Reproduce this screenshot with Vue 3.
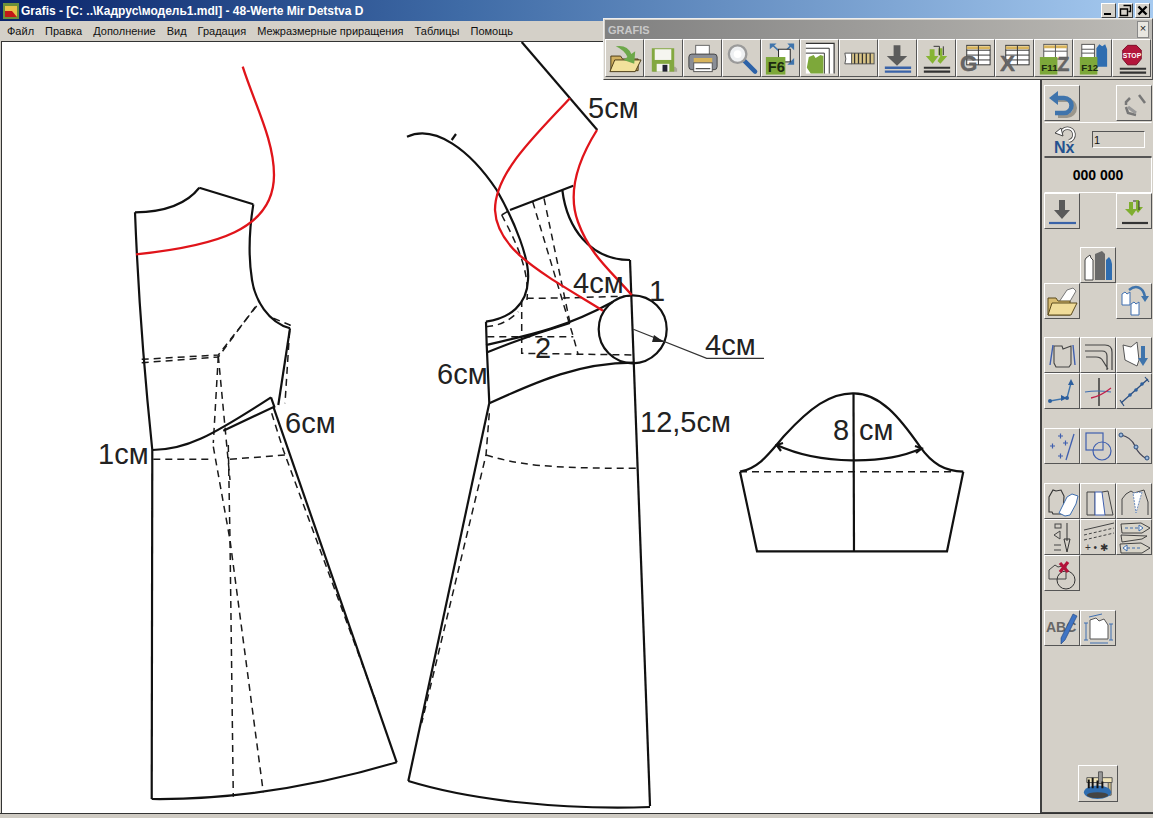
<script setup>
const ln = (p) => 'M' + p.map((q) => q.join(' ')).join('L')

const solid = [
  // left piece
  'M135 212.3C160 212 185 206 199.3 187.7',
  ln([[199.3, 187.7], [253.3, 204.3]]),
  'M253.3 204.3C250 225 248 255 252 280C255 300 268 322 290 328.3',
  ln([[290, 328.3], [278.3, 405]]),
  'M135 212.3C138 290 145 380 152.3 450',
  ln([[152.3, 450], [151.7, 799]]),
  'M151.7 799C240 800 320 785 396.7 762.3',
  ln([[396.7, 762.3], [273.3, 406.7]]),
  'M152.3 450C185 450 210 437 271 397.3',
  ln([[271, 397.3], [274.3, 406.7], [223.3, 430.7]]),
  // centre piece
  ln([[521.7, 42], [597.3, 130]]),
  'M407 136.7C435 124 470 150 496.7 190C515 222 530 260 528 280C527 305 510 318 486 321.7',
  ln([[451.7, 140], [456, 134]]),
  ln([[510, 210], [573.3, 185.7]]),
  'M562.3 190C567 228 590 260 630 260',
  ln([[630, 260], [650, 806]]),
  ln([[486, 321.7], [486.7, 345], [489.3, 403]]),
  ln([[489.3, 403], [408.3, 781]]),
  'M408.3 781C470 800 560 810 650 807',
  'M489.3 403.3C540 380 580 363 633.3 362.7',
  'M486 345C530 335 565 328 613 301.7',
  'M487.3 352.3C510 343 540 332 570 323',
  // sleeve
  'M740 471.7C760 468 770 452 785 435C810 408 830 393 853.3 393.3C880 393 900 418 920 446.7C932 464 945 471 963.3 471.7',
  ln([[740, 471.7], [757, 551.3], [947, 551.3], [963.3, 471.7]]),
  ln([[853.5, 393.3], [854, 551.3]]),
  'M776.7 445C820 465 885 465 921.7 448.3',
  ln([[783, 443], [776.7, 445], [781, 451]]),
  ln([[915, 446], [921.7, 448.3], [916, 453]])
]
const dashed = [
  ln([[141.7, 359.3], [218.3, 355], [260, 301.7]]),
  ln([[141.7, 362.7], [218.3, 357], [256.7, 305]]),
  ln([[218.3, 356], [213.3, 443]]),
  ln([[218.3, 356], [230, 480]]),
  ln([[273.3, 318.3], [290, 325], [285, 403.3]]),
  ln([[153.3, 459.3], [213.3, 459.3]]),
  ln([[230, 459.3], [285, 455]]),
  ln([[271.7, 413.3], [283.3, 450], [376.7, 703.3]]),
  ln([[213.3, 446.7], [230, 540], [263.3, 792.3]]),
  ln([[228.3, 445], [230, 540], [233.3, 796.7]]),
  ln([[501.7, 215], [510, 210]]),
  'M501.7 215C515 240 530 270 527 300',
  ln([[532.7, 201.7], [573.3, 336.7], [578.3, 355]]),
  ln([[544, 198.3], [570, 323]]),
  ln([[526.7, 298.3], [563, 298], [631.7, 296]]),
  ln([[521.7, 300], [521.7, 353.3], [633.3, 355]]),
  ln([[487.3, 336.7], [573.3, 336.7]]),
  'M486 326.7C500 326 510 320 518.3 311.7',
  ln([[489.3, 413.3], [486, 455], [421.7, 723]]),
  'M486 455C520 465 545 468.3 637.3 468.3',
  ln([[740, 471.7], [955, 471.7]])
]
const red = [
  'M242.7 66.7C255 105 274 140 274 175C274 230 215 246 136 254.3',
  'M570 98.3C530 140 495 175 495 210C497 250 540 272 603 310.7',
  'M597 130C575 165 568 195 578 222C590 255 610 270 631.7 295'
]
const labels = [
  { t: '5см', x: 588, y: 118 },
  { t: '4см', x: 573, y: 293 },
  { t: '1', x: 649, y: 301 },
  { t: '4см', x: 705, y: 355 },
  { t: '2', x: 535, y: 358 },
  { t: '6см', x: 437, y: 384 },
  { t: '12,5см', x: 640, y: 432 },
  { t: '6см', x: 285, y: 433 },
  { t: '1см', x: 98, y: 464 },
  { t: '8', x: 833, y: 440 },
  { t: 'см', x: 859, y: 440 }
]
const menu = ['Файл', 'Правка', 'Дополнение', 'Вид', 'Градация', 'Межразмерные приращения', 'Таблицы', 'Помощь']
</script>

<template>
  <div class="window">
    <header class="titlebar">
      <svg class="appicon" viewBox="0 0 16 16" width="16" height="16">
        <rect width="16" height="16" fill="#6b8f3a" />
        <rect x="2" y="3" width="12" height="11" fill="#e8c24a" />
        <path d="M2 8h7l5 6H2z" fill="#c21818" />
      </svg>
      <span class="title-text">Grafis - [C: ..\Кадрус\модель1.mdl] - 48-Werte Mir Detstva D</span>
      <div class="wincontrols">
        <span class="winbtn"><i class="w-min"></i></span>
        <span class="winbtn">
          <svg viewBox="0 0 13 13" width="13" height="13"><path d="M4.5 1.5h7v6h-2M1.5 5h7v6.5h-7z" fill="none" stroke="#000" stroke-width="1.4" /></svg>
        </span>
        <span class="winbtn">
          <svg viewBox="0 0 13 13" width="13" height="13"><path d="M2.5 2.5l8 8M10.5 2.5l-8 8" stroke="#000" stroke-width="2.4" /></svg>
        </span>
      </div>
    </header>

    <nav class="menubar">
      <span v-for="m in menu" :key="m">{{ m }}</span>
    </nav>

    <main class="workspace">
      <div class="canvas">
        <svg class="drawing" viewBox="2 42 1038 771" width="1038" height="771">
          <path v-for="(d, i) in dashed" :key="'d' + i" :d="d" class="dash" />
          <path v-for="(d, i) in solid" :key="'s' + i" :d="d" class="solid" />
          <circle cx="632.7" cy="329.3" r="34" class="solid" />
          <path d="M633.3 329.3L706.7 358.3H764" class="thin" />
          <path d="M654 335L664 342L652 342z" fill="#222" />
          <path v-for="(d, i) in red" :key="'r' + i" :d="d" class="red" />
          <text v-for="l in labels" :key="l.t + l.x" :x="l.x" :y="l.y" class="lbl">{{ l.t }}</text>
        </svg>
      </div>

      <aside class="sidebar">
        <div class="row first">
          <button class="btn">
            <svg viewBox="0 0 34 34"><path d="M11 13h9a8 8 0 0 1 0 16h-9" fill="none" stroke="#9a968c" stroke-width="4" transform="translate(2 1)" /><path d="M11 12h8a7.500 7.500 0 0 1 0 15h-9" fill="none" stroke="#3f74ac" stroke-width="4.500" /><path d="M13 5L4 12l9 7z" fill="#3f74ac" /></svg>
          </button>
          <span class="gap"></span>
          <button class="btn">
            <svg viewBox="0 0 34 34"><path d="M22 9l6 8M13 12l-4 4v3M9 21l2 6 8 2" fill="none" stroke="#777" stroke-width="2.500" /><path d="M11 21l8 6" stroke="#999" stroke-width="3" /></svg>
          </button>
        </div>
        <div class="panel nxrow">
          <svg class="nx" viewBox="0 0 28 30" width="28" height="30">
            <path d="M8 9a6.500 6.500 0 1 1 8 7" fill="none" stroke="#444" stroke-width="3.600" />
            <path d="M8 9a6.500 6.500 0 1 1 8 7" fill="none" stroke="#fff" stroke-width="2" />
            <path d="M2 8l6-5 2 8z" fill="#fff" stroke="#444" />
            <text x="1" y="28" class="nxtext">Nx</text>
          </svg>
          <input class="count" value="1" />
        </div>
        <div class="panel counter">000 000</div>
        <div class="row">
          <button class="btn">
            <svg viewBox="0 0 34 34"><path d="M14 6h6v10h5l-8 9-8-9h5z" fill="#5a5a5a" /><path d="M4 29h27" stroke="#3a63a8" stroke-width="2.200" /></svg>
          </button>
          <span class="gap"></span>
          <button class="btn">
            <svg viewBox="0 0 34 34"><path d="M12 8h4v7h4l-5 7-7-7h4zM19 6h3v7h4l-5 6-2-3z" fill="#7fae2f" /><path d="M16 7h3M22 7v9" stroke="#333" stroke-width="1" fill="none" /><path d="M5 29h26" stroke="#333" stroke-width="2.200" /></svg>
          </button>
        </div>
        <div class="row mt18">
          <span class="gap"></span>
          <button class="btn">
            <svg viewBox="0 0 34 34"><path d="M5 10l4-3 1 3 2 2v20H4V12z" fill="#fff" stroke="#444" /><path d="M14 6l7-3 3 3v26H14z" fill="#6a6a6a" /><path d="M25 12l3-3 2 3 1 4v16h-6z" fill="#2f6db0" /></svg>
          </button>
        </div>
        <div class="row">
          <button class="btn">
            <svg viewBox="0 0 34 34"><path d="M14 18l8-12 6-2 3 3-7 12z" fill="#fff" stroke="#777" /><path d="M3 14h8l2 3h12v14H3z" fill="#d9bd72" stroke="#5b4a1c" /><path d="M3 31l4-12h25l-6 12z" fill="#f0dc9a" stroke="#5b4a1c" /></svg>
          </button>
          <span class="gap"></span>
          <button class="btn">
            <svg viewBox="0 0 34 34"><path d="M5 10l3-2 2 2 3-2v13H5zM14 20l3-2 2 2 3-2v13h-8z" fill="#fff" stroke="#3f6fb0" /><path d="M12 6c6-5 14-4 16 7" fill="none" stroke="#3f74ac" stroke-width="2.500" /><path d="M24 12h8l-4 6z" fill="#3f74ac" /></svg>
          </button>
        </div>

        <div class="row mt18">
          <button class="btn">
            <svg viewBox="0 0 34 34"><path d="M9 8h8l1 3 8-3v18l-2 3H11l-2-4z" fill="none" stroke="#444" stroke-width="1.100" /><path d="M8 7L5 27M28 7l2 20" stroke="#3f5faf" stroke-width="1.400" /></svg>
          </button>
          <button class="btn">
            <svg viewBox="0 0 34 34"><path d="M4 7h20q7 0 7 7v18M4 13h17q5 0 5 5v14M5 19h10q5 0 7 4l5 8" fill="none" stroke="#444" stroke-width="1.200" /></svg>
          </button>
          <button class="btn">
            <svg viewBox="0 0 34 34"><path d="M6 7l8 2 6-5 2 18-2 6-12-6z" fill="#fff" stroke="#555" /><path d="M24 8h4v12h3l-5 8-5-8h3z" fill="#3f74ac" /></svg>
          </button>
        </div>
        <div class="row">
          <button class="btn">
            <svg viewBox="0 0 34 34"><path d="M5 27l17-3 4-15" fill="none" stroke="#3f74ac" stroke-width="1.400" /><circle cx="5" cy="27" r="2" fill="#2c5f9e" /><circle cx="22" cy="24" r="2" fill="#2c5f9e" /><path d="M16 21l6 3-6 3zM26 5l3 6h-6z" fill="#2c5f9e" /></svg>
          </button>
          <button class="btn">
            <svg viewBox="0 0 34 34"><path d="M18 4v28" stroke="#222" stroke-width="1.300" /><path d="M4 18q12-2 26 0" fill="none" stroke="#3f6fb0" stroke-width="1.200" /><path d="M10 24q10-2 20-10" fill="none" stroke="#c2214a" stroke-width="1.300" /></svg>
          </button>
          <button class="btn">
            <svg viewBox="0 0 34 34"><path d="M4 29L31 5" stroke="#2c4f80" stroke-width="1.400" /><path d="M3 26l4 6M28 3l4 5" stroke="#2c4f80" stroke-width="1.200" /><circle cx="13" cy="21" r="1.800" fill="#2c5f9e" /><circle cx="19" cy="16" r="1.800" fill="#2c5f9e" /><circle cx="25" cy="10" r="1.800" fill="#2c5f9e" /></svg>
          </button>
        </div>

        <div class="row mt19">
          <button class="btn">
            <svg viewBox="0 0 34 34" class="plus"><path d="M13 7h5M15.500 4.500v5M5 17h5M7.500 14.500v5M18 14h5M20.500 11.500v5M13 27h5M15.500 24.500v5" /><path d="M29 5L21 31" stroke="#3f5faf" stroke-width="1.300" /></svg>
          </button>
          <button class="btn">
            <svg viewBox="0 0 34 34"><rect x="5" y="4" width="17" height="17" fill="none" stroke="#3f5faf" stroke-width="1.200" /><circle cx="21" cy="22" r="9" fill="none" stroke="#3f5faf" stroke-width="1.200" /></svg>
          </button>
          <button class="btn">
            <svg viewBox="0 0 34 34"><path d="M4 6q10 2 14 11t12 13" fill="none" stroke="#445" stroke-width="1.200" /><g fill="#9cb8da" stroke="#2c4f80"><circle cx="4" cy="6" r="2" /><circle cx="19" cy="18" r="2" /><circle cx="30" cy="29" r="2" /></g></svg>
          </button>
        </div>

        <div class="row mt19">
          <button class="btn">
            <svg viewBox="0 0 34 34"><path d="M4 28V13l4-7 3 1 5-1 3 6-1 18H8l-1-2z" fill="none" stroke="#333" stroke-width="1.100" /><path d="M14 29l8-16 5-3 6 2-2 8-6 11-5 1z" fill="#fff" stroke="#3f6fb0" /></svg>
          </button>
          <button class="btn">
            <svg viewBox="0 0 34 34"><path d="M6 8h8v23H6z" fill="none" stroke="#444" /><path d="M14 8h7l3 23H14z" fill="#fff" stroke="#3f5faf" /><path d="M21 8l6-1 5 24h-8" fill="none" stroke="#444" /></svg>
          </button>
          <button class="btn">
            <svg viewBox="0 0 34 34"><path d="M5 31V15l4-5 5-3 3 2 10-3 4 12v13" fill="none" stroke="#444" /><path d="M16 9l9-1-6 21z" fill="#fff" stroke="#6f8fc0" stroke-dasharray="2 1" /></svg>
          </button>
        </div>
        <div class="row">
          <button class="btn">
            <svg viewBox="0 0 34 34"><rect x="10" y="4" width="6" height="4" fill="none" stroke="#444" /><path d="M15 11l-6 4 6 4z" fill="none" stroke="#444" /><path d="M9 25h7M9 30h7" stroke="#444" /><path d="M22 3v18" stroke="#333" /><path d="M19 19h6l-3 13z" fill="none" stroke="#333" /></svg>
          </button>
          <button class="btn">
            <svg viewBox="0 0 34 34"><path d="M3 10L33 3" stroke="#444" /><path d="M3 15L33 8M3 20L33 13" stroke="#444" stroke-dasharray="3 2" /><text x="4" y="31" class="marks">+ • ✱</text></svg>
          </button>
          <button class="btn">
            <svg viewBox="0 0 34 34"><path d="M4 4l20-1 9 5-8 5H5zM4 15l26 1-5 3-20 3zM3 24l21-1 9 5-8 5H4z" fill="#d8d4c8" stroke="#333" stroke-width=".9" /><path d="M8 8h14M10 28h14" stroke="#3f6fb0" stroke-dasharray="3 2" /><path d="M22 5l4 3-4 3zM10 25l-4 3 4 3z" fill="#fff" stroke="#3f6fb0" /></svg>
          </button>
        </div>
        <div class="row">
          <button class="btn">
            <svg viewBox="0 0 34 34"><path d="M4 23V14l6-5 3 2 8-2v14z" fill="none" stroke="#444" /><circle cx="21" cy="24" r="9" fill="none" stroke="#333" /><path d="M15 7l8 9M23 6l-8 10" stroke="#b3123a" stroke-width="3.200" /></svg>
          </button>
        </div>

        <div class="row mt19">
          <button class="btn">
            <svg viewBox="0 0 34 34"><text x="1" y="21" class="abc">ABC</text><path d="M28 3l4 2-12 24-4 4 0-6z" fill="#3f74c4" stroke="#1c3f78" stroke-width=".6" /></svg>
          </button>
          <button class="btn">
            <svg viewBox="0 0 34 34"><path d="M9 9l6-2 3 3 5-2 4 6v14H9z" fill="#fff" stroke="#555" /><path d="M8 6l13-3M5 12v17M3 12h4M3 29h4M30 13v16M28 13h4M28 29h4M9 32h18" stroke="#3f6fb0" stroke-width="1" fill="none" /></svg>
          </button>
        </div>

        <button class="btn wide">
          <svg viewBox="0 0 39 36" width="39" height="36"><path d="M8 12h26v5H8z" fill="#f0e4b8" stroke="#555" /><path d="M30 17h3v13h-3z" fill="#cdbb84" stroke="#555" /><path d="M20 6h4v12h-4z" fill="#999" stroke="#555" /><ellipse cx="19" cy="27" rx="14" ry="7" fill="#2f6db0" /><ellipse cx="19" cy="30" rx="11" ry="3" fill="#444" /><path d="M10 14v9M14 12v11M19 15v8M24 16v7" stroke="#111" stroke-width="2" /></svg>
        </button>
      </aside>
    </main>
    <footer class="statusbar"></footer>

    <section class="floating">
      <div class="float-title">
        <span>GRAFIS</span>
        <span class="float-close">×</span>
      </div>
      <div class="tools">
        <button class="tool">
          <svg viewBox="0 0 38 36"><path d="M5 31V16h10l2 3h16v12z" fill="#d0b060" stroke="#4b3c18" /><path d="M4 32l5-12h27l-6 12z" fill="#f2e19c" stroke="#4b3c18" /><path d="M10 6q12-2 16 8l4-3-1 13-11-4 4-3q-3-7-12-11z" fill="#6da84a" /></svg>
        </button>
        <button class="tool">
          <svg viewBox="0 0 38 36"><path d="M8 32h25v-3l-2-2H8z" fill="#aaa69c" /><rect x="7" y="8" width="23" height="24" fill="#83a840" /><rect x="10" y="9" width="17" height="11" fill="#f5f5f0" /><rect x="12" y="24" width="13" height="8" fill="#f5f5f0" /><rect x="18" y="25" width="5" height="7" fill="#223" /></svg>
        </button>
        <button class="tool">
          <svg viewBox="0 0 38 36"><rect x="12" y="5" width="14" height="12" fill="#fff" stroke="#666" /><rect x="5" y="14" width="29" height="16" rx="3" fill="#8a8e96" stroke="#444" /><rect x="10" y="18" width="19" height="5" fill="#d8b45c" /><rect x="10" y="23" width="19" height="9" fill="#fff" stroke="#555" /><path d="M12 29h15" stroke="#222" /></svg>
        </button>
        <button class="tool">
          <svg viewBox="0 0 38 36"><path d="M22 21l11 11" stroke="#2c62a8" stroke-width="4.500" stroke-linecap="round" /><circle cx="15" cy="14" r="9" fill="#eef0f2" stroke="#9a9a9a" stroke-width="2.400" /><circle cx="15" cy="14" r="4" fill="#fff" /></svg>
        </button>
        <button class="tool">
          <svg viewBox="0 0 38 36"><path d="M10 4l20 18M31 4L13 22" stroke="#3f74ac" stroke-width="1.500" /><path d="M8 3h7L8 9zM33 3v7l-7-7zM33 25v-7l-7 7z" fill="#3f74ac" /><rect x="17" y="9" width="12" height="13" fill="#fff" stroke="#222" /><rect x="4" y="17" width="20" height="18" fill="#7da83a" /><text x="6" y="32" class="fkey big">F6</text></svg>
        </button>
        <button class="tool">
          <svg viewBox="0 0 38 36"><path d="M5 3h29v31H5z" fill="#fff" /><path d="M5 3h29v31" fill="none" stroke="#333" stroke-width="1.200" /><path d="M5 8h24v26M5 13h19v21" fill="none" stroke="#333" stroke-width="1" /><path d="M8 17l5-2 2 3 5-3 3 1v18H10l-4-6z" fill="#7da83a" /></svg>
        </button>
        <button class="tool">
          <svg viewBox="0 0 38 36"><path d="M5 13h7v11H5l1-5z" fill="#fff" stroke="#555" /><rect x="12" y="13" width="23" height="11" fill="#d8c488" stroke="#555" /><path d="M15 13v11M19 13v11M23 13v11M27 13v11M31 13v11" stroke="#333" stroke-width="1.300" /></svg>
        </button>
        <button class="tool">
          <svg viewBox="0 0 38 36"><path d="M15 5h7v11h7L18.500 26 8 16h7z" fill="#5c5c5c" /><path d="M6 28h27M6 32h27" stroke="#3a63a8" stroke-width="2.400" /></svg>
        </button>
        <button class="tool">
          <svg viewBox="0 0 38 36"><path d="M12 9h5v7h4l-6 8-7-8h4zM21 8h4v8h5l-7 8-3-3 3-5-2-1z" fill="#86b433" /><path d="M16 6h6M22 6v9M26 6v9" stroke="#333" /><path d="M6 28h27M6 32h27" stroke="#333" stroke-width="2.200" /></svg>
        </button>
        <button class="tool">
          <svg viewBox="0 0 38 36"><rect x="10" y="5" width="24" height="20" fill="#fff" stroke="#333" /><path d="M10 6h24v3H10z" fill="#d8b45c" /><path d="M10 10h24M10 15h24M10 20h24M22 5v20" stroke="#333" /><text x="3" y="31" class="bigletter">G</text></svg>
        </button>
        <button class="tool">
          <svg viewBox="0 0 38 36"><rect x="10" y="5" width="24" height="20" fill="#fff" stroke="#333" /><path d="M10 6h24v3H10z" fill="#d8b45c" /><path d="M10 10h24M10 15h24M10 20h24M22 5v20" stroke="#333" /><text x="4" y="31" class="bigletter">X</text></svg>
        </button>
        <button class="tool">
          <svg viewBox="0 0 38 36"><rect x="9" y="4" width="24" height="15" fill="#fff" stroke="#555" /><path d="M9 5h24v3H9z" fill="#d8b45c" /><path d="M9 11h24M21 4v15" stroke="#555" /><text x="23" y="31" class="bigletter small">Z</text><rect x="5" y="17" width="18" height="18" fill="#7da83a" /><text x="6.500" y="31" class="fkey">F11</text></svg>
        </button>
        <button class="tool">
          <svg viewBox="0 0 38 36"><rect x="8" y="4" width="13" height="14" fill="#fff" stroke="#555" /><path d="M8 9h13M8 13h13" stroke="#555" /><path d="M23 8l3-4 3 2 3-2 2 5v18H23z" fill="#2f6db0" /><rect x="6" y="17" width="18" height="18" fill="#7da83a" /><text x="7.500" y="31" class="fkey">F12</text></svg>
        </button>
        <button class="tool">
          <svg viewBox="0 0 38 36"><path d="M15 5h9l5 5v9l-5 6h-9l-5-6v-9z" fill="#b3163c" stroke="#7a0c26" /><text x="19.500" y="18" text-anchor="middle" class="stop">STOP</text><path d="M7 29h27M7 33h27" stroke="#333" stroke-width="2.200" /></svg>
        </button>
      </div>
    </section>
  </div>
</template>

<style>
html, body { margin: 0; overflow: hidden; background: #d4d0c8; }
</style>

<style scoped>
.window {
  position: relative;
  width: 1153px;
  height: 818px;
  display: flex;
  flex-direction: column;
  background: #d4d0c8;
  font-family: "Liberation Sans", sans-serif;
  overflow: hidden;
}
.titlebar {
  height: 21px;
  flex: none;
  display: flex;
  align-items: center;
  padding: 0 3px;
  box-sizing: border-box;
  background: linear-gradient(90deg, #0a246a 0%, #3f6ba6 40%, #a6caf0 100%);
  color: #fff;
  gap: 2px;
}
.title-text { font-weight: 700; font-size: 12px; white-space: nowrap; }
.wincontrols { margin-left: auto; display: flex; gap: 2px; }
.winbtn {
  width: 15px;
  height: 15px;
  background: #d4d0c8;
  border: 1px solid;
  border-color: #fff #404040 #404040 #fff;
  box-sizing: border-box;
  display: flex;
  align-items: center;
  justify-content: center;
  position: relative;
}
.w-min { position: absolute; left: 2px; bottom: 2px; width: 7px; height: 2px; background: #000; }
.menubar {
  height: 20px;
  flex: none;
  display: flex;
  align-items: center;
  gap: 11px;
  padding-left: 7px;
  font-size: 11px;
  color: #111;
  box-sizing: border-box;
}
.workspace { flex: 1; display: flex; min-height: 0; }
.canvas {
  width: 1039px;
  flex: none;
  background: #fff;
  border-top: 1px solid #333;
  border-left: 1px solid #333;
  margin-left: 1px;
  box-sizing: border-box;
  overflow: hidden;
}
.drawing { display: block; }
.solid { fill: none; stroke: #111; stroke-width: 2.2; stroke-linejoin: miter; }
.dash { fill: none; stroke: #1a1a1a; stroke-width: 1.5; stroke-dasharray: 7 5; }
.red { fill: none; stroke: #e0141a; stroke-width: 2.3; }
.thin { fill: none; stroke: #333; stroke-width: 1.2; }
.lbl { font-family: "Liberation Sans", sans-serif; font-size: 29px; fill: #222; }
.sidebar {
  flex: 1;
  display: flex;
  flex-direction: column;
  border-left: 2px solid #404040;
  border-bottom: 1px solid #404040;
  box-sizing: border-box;
  padding: 44px 0 10px 2px;
  margin-top: 0;
}
.row { display: flex; flex: none; height: 36px; }
.mt18 { margin-top: 18px; }
.mt19 { margin-top: 19px; }
.gap { width: 36px; flex: none; }
.btn, .tool {
  padding: 0;
  margin: 0;
  background: #d4d0c8;
  border: 1px solid;
  border-color: #fff #555 #555 #fff;
  box-sizing: border-box;
  display: block;
}
.btn { width: 36px; height: 36px; }
.btn svg { display: block; width: 34px; height: 34px; }
.btn.wide { width: 40px; height: 37px; margin: auto 0 0 34px; }
.btn.wide svg { width: 38px; height: 35px; }
.panel {
  width: 108px;
  flex: none;
  box-sizing: border-box;
  border: 1px solid;
}
.nxrow {
  height: 35px;
  display: flex;
  align-items: center;
  border-color: #fff #d4d0c8 #555 #d4d0c8;
  gap: 11px;
  padding-left: 8px;
  margin-top: 1px;
}
.nx { flex: none; }
.count {
  width: 53px;
  height: 17px;
  box-sizing: border-box;
  border: 1px solid;
  border-color: #555 #fff #fff #555;
  background: #d4d0c8;
  font: 11px "Liberation Sans", sans-serif;
  padding: 0 1px;
  color: #111;
}
.counter {
  height: 36px;
  border-color: #555 #fff #fff #d4d0c8;
  display: flex;
  align-items: center;
  justify-content: center;
  font-weight: 700;
  font-size: 14px;
  color: #000;
}
.nxtext { font: 700 16px "Liberation Sans", sans-serif; fill: #24528f; }
.plus { fill: none; stroke: #3f5faf; stroke-width: 1.200; }
.marks { font: 10px "Liberation Sans", sans-serif; fill: #333; }
.abc { font: 700 14px "Liberation Sans", sans-serif; fill: #666; }
.statusbar { height: 5px; flex: none; background: #cfcbc3; border-top: 1px solid #333; box-sizing: border-box; }
.floating {
  position: absolute;
  left: 603px;
  top: 18px;
  width: 550px;
  height: 62px;
  background: #d4d0c8;
  border: 1px solid;
  border-color: #eee #555 #444 #eee;
  box-sizing: border-box;
  padding: 1px 0 0 1px;
}
.float-title {
  height: 19px;
  background: linear-gradient(90deg, #808080, #bdbbb6);
  color: #c8c8c8;
  font-weight: 700;
  font-size: 11px;
  display: flex;
  align-items: center;
  justify-content: space-between;
  padding: 0 3px;
}
.float-close {
  width: 10px;
  height: 15px;
  background: #e8e6e0;
  border: 1px solid #888;
  color: #222;
  font-weight: 400;
  font-size: 11px;
  line-height: 13px;
  text-align: center;
}
.tools { display: flex; }
.tool { width: 39px; height: 38px; }
.tool svg { display: block; width: 37px; height: 36px; }
.fkey { font: 700 10px "Liberation Sans", sans-serif; fill: #1c2a10; }
.fkey.big { font-size: 15px; }
.bigletter { font: 700 23px "Liberation Sans", sans-serif; fill: #666; stroke: #555; stroke-width: .4; }
.bigletter.small { font-size: 20px; }
.stop { font: 700 7px "Liberation Sans", sans-serif; fill: #fff; }
</style>
